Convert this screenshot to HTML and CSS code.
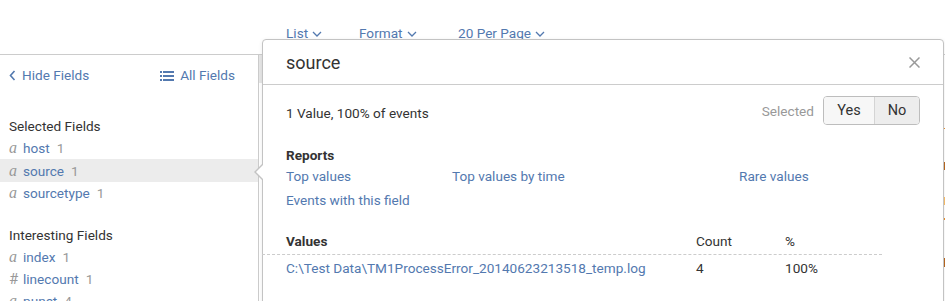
FILE: index.html
```html
<!DOCTYPE html>
<html>
<head>
    <title>Fields</title>
    <link rel="stylesheet" href="styles.css">
</head>
<body>
    <div class="toolbar">
        <span class="menu menu-list">List <svg class="caret" width="10" height="6" viewBox="0 0 10 6"><path d="M1 1l4 4 4-4" fill="none" stroke="currentColor" stroke-width="1.3"/></svg></span>
        <span class="menu menu-format">Format <svg class="caret" width="10" height="6" viewBox="0 0 10 6"><path d="M1 1l4 4 4-4" fill="none" stroke="currentColor" stroke-width="1.3"/></svg></span>
        <span class="menu">20 Per Page <svg class="caret" width="10" height="6" viewBox="0 0 10 6"><path d="M1 1l4 4 4-4" fill="none" stroke="currentColor" stroke-width="1.3"/></svg></span>
    </div>

    <div class="main">
        <div class="sidebar">
            <div class="sidebar-head">
                <a class="link"><svg width="7" height="11" viewBox="0 0 7 11"><path d="M5.5 1L1.5 5.5l4 4.5" fill="none" stroke="currentColor" stroke-width="1.6"/></svg> Hide Fields</a>
                <a class="link"><svg width="14" height="11" viewBox="0 0 14 11"><rect x="0" y="1" width="2" height="2" fill="currentColor"/><rect x="3" y="1" width="11" height="2" fill="currentColor"/><rect x="0" y="5" width="2" height="2" fill="currentColor"/><rect x="3" y="5" width="11" height="2" fill="currentColor"/><rect x="0" y="9" width="2" height="2" fill="currentColor"/><rect x="3" y="9" width="11" height="2" fill="currentColor"/></svg> All Fields</a>
            </div>

            <div class="group-title first">Selected Fields</div>
            <div class="field"><span class="type">a</span><span class="name">host</span><span class="count">1</span></div>
            <div class="field active"><span class="type">a</span><span class="name">source</span><span class="count">1</span></div>
            <div class="field"><span class="type">a</span><span class="name">sourcetype</span><span class="count">1</span></div>

            <div class="group-title">Interesting Fields</div>
            <div class="field"><span class="type">a</span><span class="name">index</span><span class="count">1</span></div>
            <div class="field"><span class="type num">#</span><span class="name">linecount</span><span class="count">1</span></div>
            <div class="field"><span class="type">a</span><span class="name">punct</span><span class="count">4</span></div>
        </div>
        <div class="gutter"><div class="thumb"></div></div>
    </div>

    <div class="popup">
        <div class="arrow"></div>
        <div class="popup-head">
            <span class="popup-title">source</span>
            <svg class="close" width="11" height="11" viewBox="0 0 11 11"><path d="M0.5 0.5l10 10M10.5 0.5l-10 10" stroke="#999" stroke-width="1.5"/></svg>
        </div>
        <div class="popup-body">
            <div class="summary">
                <span class="summary-text">1 Value, 100% of events</span>
                <div class="selected">
                    <span class="selected-label">Selected</span>
                    <div class="btn-group">
                        <button class="btn active">Yes</button>
                        <button class="btn">No</button>
                    </div>
                </div>
            </div>

            <div class="section-title">Reports</div>
            <div class="reports">
                <a class="link">Top values</a>
                <a class="link">Top values by time</a>
                <a class="link">Rare values</a>
                <a class="link">Events with this field</a>
            </div>

            <div class="values">
                <div class="vrow vhead">
                    <span class="vcell first">Values</span>
                    <span class="vcell">Count</span>
                    <span class="vcell">%</span>
                </div>
                <div class="vrow">
                    <span class="vcell first link">C:\Test Data\TM1ProcessError_20140623213518_temp.log</span>
                    <span class="vcell">4</span>
                    <span class="vcell">100%</span>
                </div>
            </div>
        </div>
    </div>

    <div class="edge">
        <span class="tick t1"></span>
        <span class="tick t2"></span>
        <span class="tick t3"></span>
        <span class="tick t4"></span>
        <span class="tick t5"></span>
    </div>
</body>
</html>
```

FILE: styles.css
```css
body {
    margin: 0;
    font-family: Roboto, "Noto Sans", sans-serif;
    font-size: 13.6px;
    color: #333;
    background: #fff;
    position: relative;
    height: 301px;
    overflow: hidden;
}
.link {
    color: #5379af;
    text-decoration: none;
}
.toolbar {
    height: 55px;
    box-sizing: border-box;
    border-bottom: 1px solid #ccc;
    padding: 24px 0 0 286px;
    color: #5379af;
    display: flex;
    align-items: flex-start;
}
.menu {
    display: flex;
    align-items: center;
    height: 18px;
}
.menu-list {
    width: 73px;
}
.menu-format {
    width: 99px;
}
.caret {
    margin-left: 4px;
    margin-top: 1px;
}
.main {
    display: flex;
    height: 246px;
}
.sidebar {
    width: 258px;
    border-right: 1px solid #ccc;
}
.gutter {
    width: 3px;
}
.thumb {
    height: 28px;
    background: #e6e6e6;
}
.sidebar-head {
    height: 40px;
    display: flex;
    align-items: center;
    justify-content: space-between;
    padding: 0 23px 0 9px;
}
.sidebar-head .link {
    display: inline-flex;
    align-items: center;
    gap: 6px;
}
.group-title {
    height: 22px;
    line-height: 22px;
    padding-left: 9px;
    margin-top: 20px;
}
.field {
    height: 22px;
    padding-left: 9px;
    display: flex;
    align-items: center;
}
.field.active {
    background: #ececec;
    height: 23px;
}
.type {
    font-family: "Liberation Serif", serif;
    font-style: italic;
    font-size: 16px;
    line-height: 1;
    color: #999;
    width: 14px;
}
.type.num {
    font-family: Roboto, sans-serif;
    font-style: normal;
    font-size: 15px;
}
.name {
    color: #5379af;
}
.count {
    color: #999;
    margin-left: 7px;
}
.popup {
    position: absolute;
    left: 262px;
    top: 39px;
    width: 682px;
    height: 290px;
    box-sizing: border-box;
    background: #fff;
    border: 1px solid #c3c3c3;
    border-radius: 4px;
    box-shadow: 0 1px 4px rgba(0, 0, 0, 0.08);
}
.arrow {
    position: absolute;
    left: -9px;
    top: 124px;
    width: 0;
    height: 0;
    border-top: 8px solid transparent;
    border-bottom: 8px solid transparent;
    border-right: 8px solid #c3c3c3;
}
.arrow::after {
    content: "";
    position: absolute;
    left: 2px;
    top: -7px;
    border-top: 7px solid transparent;
    border-bottom: 7px solid transparent;
    border-right: 7px solid #fff;
}
.popup-head {
    height: 45px;
    box-sizing: border-box;
    border-bottom: 1px solid #ccc;
    display: flex;
    align-items: center;
    justify-content: space-between;
    padding: 0 23px 0 23px;
}
.popup-title {
    font-size: 18px;
    color: #333;
}
.popup-body {
    padding: 0 23px;
}
.summary {
    margin-top: 11px;
    height: 29px;
    display: flex;
    align-items: center;
    justify-content: space-between;
}
.summary-text {
    padding-top: 5px;
}
.selected {
    display: flex;
    align-items: center;
}
.selected-label {
    color: #999;
    margin-right: 9px;
}
.btn-group {
    display: flex;
    border: 1px solid #bdbdbd;
    border-radius: 4px;
    overflow: hidden;
    height: 29px;
    box-sizing: border-box;
}
.btn {
    font-family: Roboto, sans-serif;
    font-size: 14.5px;
    color: #333;
    border: none;
    background: #ededed;
    padding: 0;
    margin: 0;
    width: 44px;
}
.btn.active {
    width: 51px;
    background: #f7f7f7;
    border-right: 1px solid #d4d4d4;
}
.section-title {
    font-weight: bold;
    line-height: 20px;
    margin-top: 20px;
}
.reports {
    display: grid;
    grid-template-columns: 166px 287px auto;
    line-height: 24px;
    margin-top: -1px;
}
.values {
    margin: 19px 0 0 -24px;
    width: 620px;
}
.vrow {
    display: grid;
    grid-template-columns: 434px 89px auto;
    line-height: 27px;
}
.vrow.vhead {
    line-height: 20px;
    padding-bottom: 3px;
    border-bottom: 1px dashed #ccc;
}
.vhead .vcell.first {
    font-weight: bold;
}
.vcell.first {
    padding-left: 24px;
}
.edge {
    position: absolute;
    right: 0;
    top: 40px;
    width: 1px;
    height: 261px;
}
.tick {
    position: absolute;
    left: 0;
    width: 1px;
    background: #e08a2c;
}
.t1 { top: 88px; height: 1px; }
.t2 { top: 122px; height: 8px; background: #b2641e; }
.t3 { top: 157px; height: 8px; background: #f2b866; }
.t4 { top: 178px; height: 2px; }
.t5 { top: 218px; height: 9px; background: #b2641e; }
```
